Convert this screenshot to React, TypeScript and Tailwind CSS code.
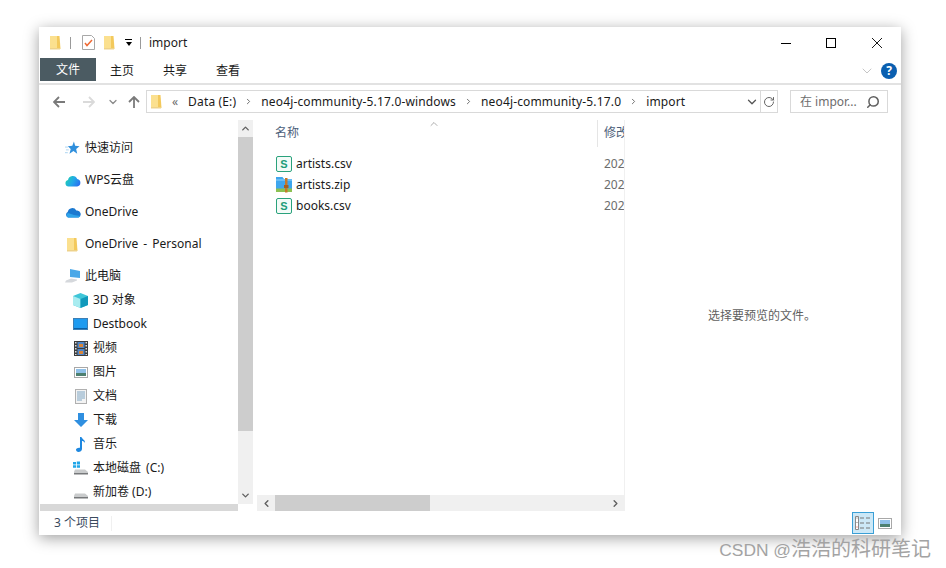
import type { ReactNode } from 'react';
import { ChevronDown, ChevronUp, Search, RotateCw } from 'lucide-react';

const FONT = 'font-["Noto_Sans","Noto_Sans_CJK_SC",sans-serif]';

// 黄色小文件夹 (标题栏、地址栏、侧边栏共用)
function FolderSlim() {
  return (
    <svg width="11" height="15" viewBox="0 0 11 15">
      <path d="M0 1h7l1 1v12H0z" fill="#fbe08f" />
      <path d="M7 1h2.500l1 13H7z" fill="#f3c95c" />
      <path d="M0 13h10v1.500H0z" fill="#eed28a" />
    </svg>
  );
}

function CheckDoc() {
  return (
    <svg width="13" height="15" viewBox="0 0 13 15">
      <path d="M.5.500h9l3 3v11H.500z" fill="#fff" stroke="#a8a8a8" />
      <path d="M3 8l2 2.500L10 5" fill="none" stroke="#ee6a35" strokeWidth="1.500" />
    </svg>
  );
}

function CsvIcon() {
  return (
    <svg width="16" height="16" viewBox="0 0 16 16">
      <rect x=".5" y=".5" width="15" height="15" rx="1.500" fill="#f4fbf8" stroke="#2aa27c" />
      <text x="8" y="12" textAnchor="middle" fontSize="11" fontWeight="700" fill="#1f9d78" fontFamily="Liberation Sans">S</text>
    </svg>
  );
}

function ZipIcon() {
  return (
    <svg width="16" height="16" viewBox="0 0 16 16">
      <path d="M0 0h6.500L8 2h8v10H0z" fill="#3ea6ee" />
      <path d="M0 11.500h16V15H0z" fill="#8cc152" />
      <path d="M0 2h16v2H0z" fill="#68bcf4" />
      <rect x="9" y="1" width="2.500" height="14.500" fill="#c5792a" />
      <rect x="8" y="8" width="4.500" height="3" fill="#a85f1c" />
    </svg>
  );
}

function StarIcon() {
  return (
    <svg width="15" height="14" viewBox="0 0 16 14">
      <path d="M9.500 0l1.300 4.700L15.500 5l-3.600 3.100L13 13 9 10.300 4.800 13l1.300-5L3 5l4.800-.3z" fill="#2f8fdc" />
      <path d="M0 6h3M1 9h3M0 12h3" stroke="#a9d2f0" />
    </svg>
  );
}

function WpsCloud() {
  return (
    <svg width="16" height="13" viewBox="0 0 16 13">
      <defs>
        <linearGradient id="wps" x1="0" x2="1" y1="0.300" y2="0.700">
          <stop offset="0" stopColor="#1fd0b0" />
          <stop offset="0.500" stopColor="#22a8e8" />
          <stop offset="1" stopColor="#2a6ff0" />
        </linearGradient>
      </defs>
      <path d="M3.500 12.500a3.300 3.300 0 0 1-.5-6.500 4.800 4.800 0 0 1 9.200-1 3.800 3.800 0 0 1 0 7.500z" fill="url(#wps)" />
    </svg>
  );
}

function OneDriveCloud() {
  return (
    <svg width="16" height="11" viewBox="0 0 16 11">
      <path d="M3 10.500a3 3 0 0 1-.3-5.500 4.600 4.600 0 0 1 8.600-1.500 3.700 3.700 0 0 1 2.200 7z" fill="#1a78d0" />
      <path d="M3 10.500a2.500 2.500 0 0 1 0-4.500l6 2 6.200 1a2.500 2.500 0 0 1-1.700 1.500z" fill="#2ea3ea" />
    </svg>
  );
}

function PcIcon() {
  return (
    <svg width="16" height="14" viewBox="0 0 16 14">
      <path d="M5 0l10 2v7L5 8z" fill="#4aa8e8" />
      <path d="M6 9.500l6 1v1l-5 2H0l1-2z" fill="#d5d8dc" />
    </svg>
  );
}

function CubeIcon() {
  return (
    <svg width="15" height="15" viewBox="0 0 15 15">
      <path d="M7.500 0L15 3v9l-7.500 3L0 12V3z" fill="#3fc6d8" />
      <path d="M0 3l7.500 3v9L0 12z" fill="#a8ecf0" />
      <path d="M7.500 6L15 3v9l-7.500 3z" fill="#1199bb" />
    </svg>
  );
}

function DesktopIcon() {
  return (
    <svg width="15" height="12" viewBox="0 0 15 12">
      <rect x=".5" y=".5" width="14" height="11" fill="#1e9bf0" stroke="#3d7fb5" />
      <rect x="1" y="10" width="13" height="1" fill="#0a5fa5" />
    </svg>
  );
}

function FilmIcon() {
  return (
    <svg width="14" height="15" viewBox="0 0 14 15">
      <rect width="14" height="15" fill="#3c3c3c" />
      <path d="M1 1h1.500v1.500H1zM1 4h1.500v1.500H1zM1 7h1.500v1.500H1zM1 10h1.500v1.500H1zM1 13h1.500v1H1zM11.500 1H13v1.500h-1.500zM11.500 4H13v1.500h-1.500zM11.500 7H13v1.500h-1.500zM11.500 10H13v1.500h-1.500zM11.500 13H13v1h-1.500z" fill="#ddd" />
      <rect x="3.500" y="1" width="7" height="6" fill="#4f86c8" />
      <rect x="3.500" y="8" width="7" height="6" fill="#4f86c8" />
      <path d="M5 3h4v3H5zM5 10h4v3H5z" fill="#d8853a" />
    </svg>
  );
}

function PictureIcon() {
  return (
    <svg width="14" height="11" viewBox="0 0 14 11">
      <rect x=".5" y=".5" width="13" height="10" fill="#fff" stroke="#a8a8a8" />
      <rect x="2" y="2" width="10" height="4" fill="#8fc0e8" />
      <rect x="2" y="6" width="10" height="3" fill="#4d8070" />
    </svg>
  );
}

function DocIcon() {
  return (
    <svg width="12" height="15" viewBox="0 0 12 15">
      <rect x=".5" y=".5" width="11" height="14" fill="#f3f3f3" stroke="#b0b0b0" />
      <path d="M2 3h8M2 5h8M2 7h8M2 9h8M2 11h5" stroke="#7fa6c4" />
    </svg>
  );
}

function DownIcon() {
  return (
    <svg width="14" height="14" viewBox="0 0 14 14">
      <path d="M4 0h6v7h4l-7 7-7-7h4z" fill="#2f8fe0" />
    </svg>
  );
}

function NoteIcon() {
  return (
    <svg width="10" height="15" viewBox="0 0 10 15">
      <path d="M4 0h1.500c.3 2 4 3 3.500 6-.8-1.500-2-2-3-2v8c0 2-2 3-3.500 3S0 14 0 12.800 1.500 10.500 4 10.800z" fill="#1e88e0" />
    </svg>
  );
}

function DriveIcon({ windows }: { windows?: boolean }) {
  return (
    <svg width="15" height="14" viewBox="0 0 15 14">
      {windows && <path d="M0 1h3v2.500H0zM3.800 .5H7V3.500H3.800zM0 4.300h3v2.500H0zM3.800 4.300H7v2.500H3.800z" fill="#21a6e8" />}
      <path d="M2 8.500h10l3 2.500v2H1v-2z" fill="#c9cbcc" />
      <path d="M1 12h14v1.500H1z" fill="#77797b" />
    </svg>
  );
}

// 地址栏的粗箭头
function NavArrow({ rotate, color }: { rotate: string; color: string }) {
  return (
    <svg width="12" height="12" viewBox="0 0 12 12" className={rotate}>
      <path d="M6 1L1 6l5 5M1.200 6H12" fill="none" stroke={color} strokeWidth="1.800" />
    </svg>
  );
}

function NavRow({ icon, label, sub, tall, wide }: { icon: ReactNode; label: string; sub?: boolean; tall?: boolean; wide?: boolean }) {
  return (
    <div className={`flex shrink-0 items-center ${tall ? 'h-8' : 'h-6'} ${sub ? 'pl-[32px]' : 'pl-[24px]'}`}>
      <span className="flex w-[21px] shrink-0 items-center justify-center pr-[4px]">{icon}</span>
      <span className={`whitespace-nowrap text-[12px] text-[#1a1a1a] ${wide ? '[word-spacing:2px]' : ''}`}>{label}</span>
    </div>
  );
}

function Sidebar() {
  return (
    <div className="flex w-[213px] shrink-0 flex-col">
      <div className="flex min-h-0 flex-1">
        <div className="flex min-w-0 flex-1 flex-col overflow-hidden pt-[12px]">
          <NavRow tall icon={<StarIcon />} label="快速访问" />
          <NavRow tall icon={<WpsCloud />} label="WPS云盘" />
          <NavRow tall icon={<OneDriveCloud />} label="OneDrive" />
          <NavRow tall wide icon={<FolderSlim />} label="OneDrive - Personal" />
          <div className="h-1 shrink-0" />
          <NavRow icon={<PcIcon />} label="此电脑" />
          <NavRow sub icon={<CubeIcon />} label="3D 对象" />
          <NavRow sub icon={<DesktopIcon />} label="Destbook" />
          <NavRow sub icon={<FilmIcon />} label="视频" />
          <NavRow sub icon={<PictureIcon />} label="图片" />
          <NavRow sub icon={<DocIcon />} label="文档" />
          <NavRow sub icon={<DownIcon />} label="下载" />
          <NavRow sub icon={<NoteIcon />} label="音乐" />
          <NavRow sub wide icon={<DriveIcon windows />} label="本地磁盘 (C:)" />
          <NavRow sub icon={<DriveIcon />} label="新加卷 (D:)" />
        </div>
        {/* 侧边栏竖向滚动条 */}
        <div className="flex w-[15px] shrink-0 flex-col bg-[#f0f0f0]">
          <div className="flex h-[17px] items-center justify-center">
            <ChevronUp size={11} strokeWidth={3} className="text-[#606060]" />
          </div>
          <div className="h-[294px] bg-[#cdcdcd]" />
          <div className="flex-1" />
          <div className="flex h-[17px] items-center justify-center">
            <ChevronDown size={11} strokeWidth={3} className="text-[#606060]" />
          </div>
        </div>
      </div>
      <div className="mr-[15px] h-[7px] bg-[#d8d8d8]" />
    </div>
  );
}

function FileRow({ icon, name }: { icon: ReactNode; name: string }) {
  return (
    <div className="flex h-[21px] items-center">
      <span className="flex w-[21px] shrink-0 pl-[1px]">{icon}</span>
      <span className="w-[308px] shrink-0 text-[12px] text-[#1a1a1a]">{name}</span>
      <span className="text-[12px] text-[#6d6d6d]">202</span>
    </div>
  );
}

function FileList() {
  return (
    <div className="ml-[4px] flex w-[367px] shrink-0 flex-col overflow-hidden">
      <div className="relative h-[26px] shrink-0">
        <ChevronUp size={12} strokeWidth={1.2} className="absolute left-[171px] top-[-2px] text-[#777777]" />
        <div className="flex h-full items-center pl-[18px]">
          <span className="w-[322px] shrink-0 text-[12px] text-[#4c607a]">名称</span>
          <span className="h-[27px] w-px shrink-0 self-start bg-[#e5e5e5]" />
          <span className="ml-[6px] shrink-0 whitespace-nowrap text-[12px] text-[#4c607a]">修改</span>
        </div>
      </div>
      <div className="flex-1 pl-[18px] pt-[7px]">
        <FileRow icon={<CsvIcon />} name="artists.csv" />
        <FileRow icon={<ZipIcon />} name="artists.zip" />
        <FileRow icon={<CsvIcon />} name="books.csv" />
      </div>
      <div className="flex h-4 shrink-0 items-center bg-[#f0f0f0]">
        <span className="flex w-[18px] justify-center">
          <ChevronDown size={11} strokeWidth={3} className="rotate-90 text-[#606060]" />
        </span>
        <div className="h-full w-[155px] bg-[#cdcdcd]" />
        <div className="flex-1" />
        <span className="flex w-[18px] justify-center">
          <ChevronDown size={11} strokeWidth={3} className="-rotate-90 text-[#606060]" />
        </span>
      </div>
    </div>
  );
}

function Crumb({ label }: { label: string }) {
  return <span className="whitespace-nowrap text-[12px] tracking-[0.15px] text-[#1a1a1a]">{label}</span>;
}

function Sep() {
  return <ChevronDown size={9} strokeWidth={2.5} className="mx-[8px] shrink-0 -rotate-90 text-[#6a6a6a]" />;
}

export default function App() {
  return (
    <div className={`flex h-[568px] w-[946px] flex-col overflow-hidden bg-white pl-[39px] pt-[27px] ${FONT}`}>
      <div className="flex h-[508px] w-[862px] shrink-0 flex-col bg-white shadow-[0_3px_14px_rgba(0,0,0,0.38)]">
        {/* 标题栏 */}
        <div className="flex h-[31px] shrink-0 items-center pl-[11px]">
          <FolderSlim />
          <span className="ml-[9px] h-[12px] w-px bg-[#9a9a9a]" />
          <span className="ml-[11px]"><CheckDoc /></span>
          <span className="ml-[9px]"><FolderSlim /></span>
          <span className="ml-[10px] flex flex-col items-center">
            <span className="h-px w-[7px] bg-black" />
            <span className="mt-[2px] h-0 w-0 border-x-[3.5px] border-t-[4px] border-x-transparent border-t-black" />
          </span>
          <span className="ml-[8px] h-[12px] w-px bg-[#9a9a9a]" />
          <span className="ml-[8px] text-[12px] text-[#1a1a1a]">import</span>
          <div className="ml-auto flex items-center pr-[19px]">
            <svg width="10" height="10" viewBox="0 0 10 10"><path d="M0 5.500h10" stroke="#000" /></svg>
            <svg width="10" height="10" viewBox="0 0 10 10" className="ml-[35px]"><rect x=".5" y=".5" width="9" height="9" fill="none" stroke="#000" /></svg>
            <svg width="10" height="10" viewBox="0 0 10 10" className="ml-[36px]"><path d="M0 0l10 10M10 0L0 10" stroke="#000" strokeWidth="0.900" /></svg>
          </div>
        </div>
        {/* 功能区选项卡 */}
        <div className="flex h-[27px] shrink-0 items-start border-b-[2px] border-[#e2e2e2]">
          <div className="ml-[1px] flex h-[23px] w-[56px] items-center justify-center bg-[#4b5b62] text-[12px] text-white">文件</div>
          <span className="ml-[14px] mt-[4px] w-[39px] text-[12px] text-[#1a1a1a]">主页</span>
          <span className="ml-[14px] mt-[4px] w-[39px] text-[12px] text-[#1a1a1a]">共享</span>
          <span className="ml-[14px] mt-[4px] text-[12px] text-[#1a1a1a]">查看</span>
          <div className="ml-auto mr-[4px] mt-[5px] flex items-center">
            <ChevronDown size={16} strokeWidth={1} className="text-[#a8a8a8]" />
            <span className="ml-[6px] flex h-4 w-4 items-center justify-center rounded-full bg-[#0a5fb0] text-[12px] font-bold leading-none text-white">?</span>
          </div>
        </div>
        {/* 地址栏 */}
        <div className="flex h-[33px] shrink-0 items-center">
          <span className="ml-[14px] flex"><NavArrow rotate="" color="#7a7a7a" /></span>
          <span className="ml-[18px] flex"><NavArrow rotate="rotate-180" color="#dadada" /></span>
          <ChevronDown size={12} strokeWidth={2.5} className="ml-[12px] text-[#8a8a8a]" />
          <span className="ml-[9px] flex"><NavArrow rotate="rotate-90" color="#7a7a7a" /></span>
          <div className="ml-[6px] flex h-[23px] w-[632px] items-center border border-[#d9d9d9]">
            <span className="ml-[4px] flex"><FolderSlim /></span>
            <span className="ml-[10px] text-[12px] text-[#6a6a6a]">«</span>
            <span className="ml-[10px] flex"><Crumb label="Data (E:)" /></span>
            <Sep />
            <Crumb label="neo4j-community-5.17.0-windows" />
            <Sep />
            <Crumb label="neo4j-community-5.17.0" />
            <Sep />
            <Crumb label="import" />
            <ChevronDown size={14} strokeWidth={2.2} className="ml-auto mr-[1px] text-[#555555]" />
            <span className="flex h-full w-[17px] items-center justify-center border-l border-[#d9d9d9]">
              <RotateCw size={12} strokeWidth={2} className="text-[#666666]" />
            </span>
          </div>
          <div className="ml-[12px] flex h-[23px] w-[98px] items-center border border-[#d9d9d9] pl-[9px] pr-[7px]">
            <span className="text-[12px] text-[#6d6d6d]">在 impor...</span>
            <Search size={14} strokeWidth={2.6} className="ml-auto -scale-x-100 text-[#606060]" />
          </div>
        </div>
        {/* 主体 */}
        <div className="mt-[2px] flex min-h-0 flex-1 pl-[1px]">
          <Sidebar />
          <FileList />
          <div className="flex flex-1 items-center justify-center border-l border-[#f0f0f0] pr-[2px] text-[12px] text-[#5f5f5f]">
            选择要预览的文件。
          </div>
        </div>
        {/* 状态栏 */}
        <div className="flex h-[24px] shrink-0 items-center pl-[15px] pr-[9px]">
          <span className="text-[12px] text-[#3a4a5e]">3 个项目</span>
          <span className="ml-[11px] h-[15px] w-px bg-[#f0f0f0]" />
          <div className="ml-auto flex items-center">
            <span className="flex h-[22px] w-[22px] items-center justify-center border border-[#3a9fd6] bg-[#cce8f7]">
              <svg width="16" height="14" viewBox="0 0 16 14">
                <path d="M.5.500h3v13h-3z" fill="#fff" stroke="#888888" />
                <path d="M1.500 2h1M1.500 6.500h1" stroke="#777777" />
                <path d="M1.500 11h1" stroke="#e04030" />
                <path d="M5 2h4M11 2h4M5 7h4M11 7h4M5 12h4M11 12h4" stroke="#777777" />
              </svg>
            </span>
            <span className="ml-[4px] flex w-[14px] items-center justify-center">
              <PictureIcon />
            </span>
          </div>
        </div>
      </div>
      {/* 水印 */}
      <div className="mr-[15px] mt-[1px] self-end whitespace-nowrap font-['Liberation_Sans','Noto_Sans_CJK_SC',sans-serif] text-[20px] leading-[26px] text-[#a3a3a3]">
        <span className="text-[17.4px]">CSDN @</span>浩浩的科研笔记
      </div>
    </div>
  );
}
